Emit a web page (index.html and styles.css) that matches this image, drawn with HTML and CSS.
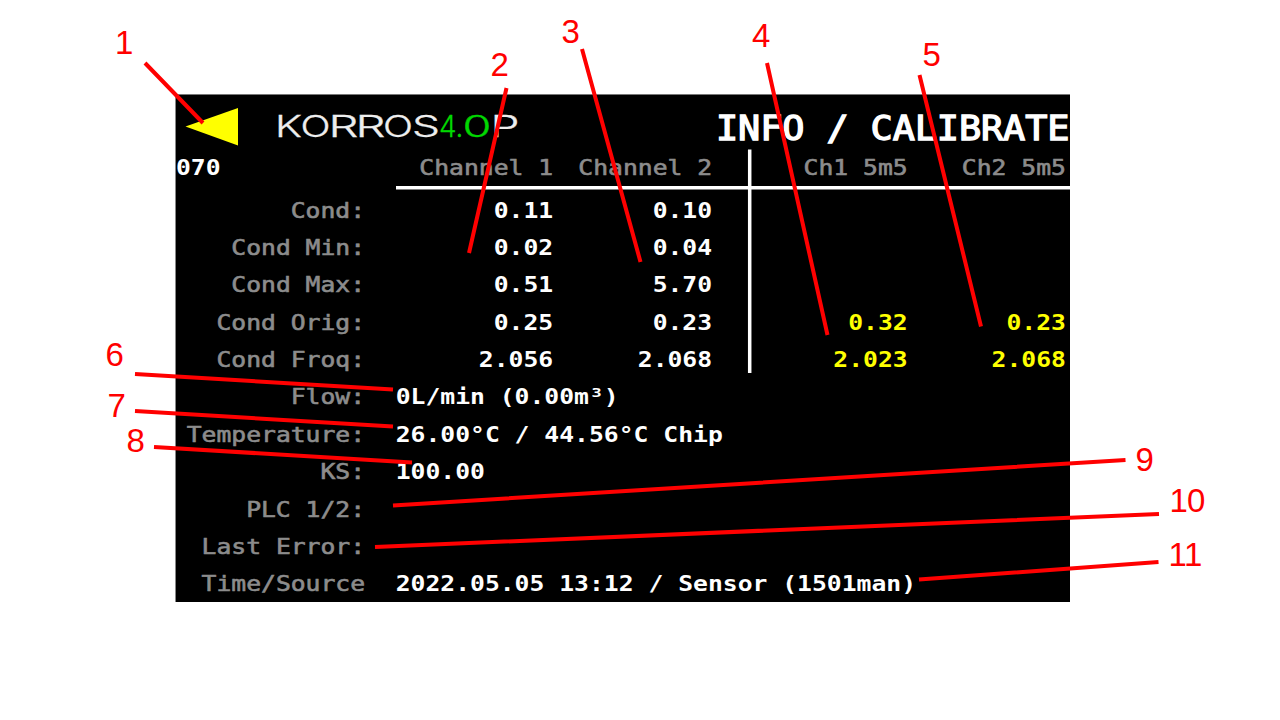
FILE: index.html
```
<!DOCTYPE html>
<html lang="en">
<head>
<meta charset="utf-8">
<title>Info / Calibrate</title>
<link rel="stylesheet" href="styles.css">
</head>
<body>
<main class="page">
  <section class="screen">
    <header class="top">
      <svg class="back" width="54" height="40" viewBox="0 0 54 40"><path d="M0.5 19.5 53 1v37.500z" fill="#ff0"/></svg>
      <svg class="logo" width="250" height="36" viewBox="278 108 250 36">
        <g class="brand">
          <text y="137" x="275" textLength="27" lengthAdjust="spacingAndGlyphs">K</text>
          <text y="137" x="300.500" textLength="30" lengthAdjust="spacingAndGlyphs">O</text>
          <text y="137" x="328.500" textLength="30" lengthAdjust="spacingAndGlyphs">R</text>
          <text y="137" x="355.500" textLength="30" lengthAdjust="spacingAndGlyphs">R</text>
          <text y="137" x="383" textLength="30" lengthAdjust="spacingAndGlyphs">O</text>
          <text y="137" x="412" textLength="28" lengthAdjust="spacingAndGlyphs">S</text>
          <g class="green">
            <text y="137" x="439" textLength="24.500" lengthAdjust="spacingAndGlyphs">4.</text>
            <text y="137" x="462.500" textLength="29" lengthAdjust="spacingAndGlyphs">0</text>
          </g>
          <text y="137" x="490.500" textLength="29" lengthAdjust="spacingAndGlyphs">P</text>
        </g>
      </svg>
      <h1 class="title">INFO / CALIBRATE</h1>
    </header>
    <div class="readings">
      <span class="code">070</span><span class="head">Channel 1</span><span class="head">Channel 2</span><span class="head">Ch1 5m5</span><span class="head">Ch2 5m5</span>
      <span class="label">Cond:</span><b>0.11</b><b>0.10</b><b></b><b></b>
      <span class="label">Cond Min:</span><b>0.02</b><b>0.04</b><b></b><b></b>
      <span class="label">Cond Max:</span><b>0.51</b><b>5.70</b><b></b><b></b>
      <span class="label">Cond Orig:</span><b>0.25</b><b>0.23</b><b class="yellow">0.32</b><b class="yellow">0.23</b>
      <span class="label">Cond Froq:</span><b>2.056</b><b>2.068</b><b class="yellow">2.023</b><b class="yellow">2.068</b>
      <span class="label">Flow:</span><b class="wide">0L/min (0.00m³)</b>
      <span class="label">Temperature:</span><b class="wide">26.00°C / 44.56°C Chip</b>
      <span class="label">KS:</span><b class="wide">100.00</b>
      <span class="label">PLC 1/2:</span><b class="wide"></b>
      <span class="label">Last Error:</span><b class="wide"></b>
      <span class="label">Time/Source</span><b class="wide">2022.05.05 13:12 / Sensor (1501man)</b>
    </div>
  </section>
  <svg class="overlay" width="1280" height="720" viewBox="0 0 1280 720">
    <g class="rules"><path d="M396 187.800H1070M749.700 149.500V373"/></g>
    <g class="leaders">
      <path d="M145 63 203 123M506.500 88 469 253M582 49 640.500 262M767 63 827.500 335M919.500 75 981 326.500M135 374 393 389.500M135 411 393 426.500M154 447 412 462.500M393 505.500 1125.500 460M375 547 1159 514M919 579.500 1158.500 562"/>
    </g>
    <g class="numbers">
      <text x="115" y="54">1</text><text x="490.500" y="75.500">2</text><text x="561.500" y="42.500">3</text>
      <text x="752" y="47">4</text><text x="922.500" y="65.500">5</text><text x="105.500" y="365.500">6</text>
      <text x="107.500" y="416.500">7</text><text x="126.500" y="451.500">8</text><text x="1135.500" y="471">9</text>
      <text x="1169.500 1187" y="512">10</text><text x="1168.500 1184" y="565.500">11</text>
    </g>
  </svg>
</main>
</body>
</html>
```
FILE: styles.css
```
body { margin: 0; background: #fff; }
.page {
  position: relative;
  box-sizing: border-box;
  width: 1280px;
  height: 720px;
  padding: 94px 0 0 175px;
  overflow: hidden;
}
.screen {
  box-sizing: border-box;
  width: 895px;
  height: 508px;
  border-top: 1px solid #777;
  border-left: 1px solid #888;
  background: #000;
  color: #fff;
  overflow: hidden;
  font-family: "DejaVu Sans Mono", monospace;
}
.top {
  display: flex;
  align-items: flex-start;
  height: 55px;
}
.back { margin: 12px 0 0 9px; flex: none; }
.logo { margin: 13px 0 0 39px; flex: none; overflow: visible; }
.brand {
  font-family: Inter, sans-serif;
  font-weight: 300;
  font-size: 30px;
  fill: #eee;
  stroke: #eee;
  stroke-width: 0.300px;
}
.brand .green { fill: #00d800; stroke: #00d800; }
.title {
  margin: 14px 0 0 188px;
  font-size: 33px;
  line-height: 40px;
  font-weight: normal;
  -webkit-text-stroke: 1.300px #fff;
  letter-spacing: -0.100px;
  white-space: pre;
  transform: scaleX(1.117);
  transform-origin: 0 0;
}
/* The display's characters are wider than the font's own cells. */
.readings {
  display: grid;
  grid-template-columns: 160.8px 159.9px 135.2px 166.3px 134.6px;
  grid-template-rows: 42.500px;
  grid-auto-rows: 37.380px;
  width: 758px;
  font-size: 21px;
  line-height: 37.300px;
  text-align: right;
  white-space: pre;
  transform: scaleX(1.176);
  transform-origin: 0 0;
}
.code { text-align: left; font-weight: bold; }
.head, .label { color: #8c8c8c; -webkit-text-stroke: 0.6px #8c8c8c; }
.wide {
  grid-column: 2 / -1;
  padding-left: 26px;
  text-align: left;
}
.yellow { color: #ff0; }
.overlay { position: absolute; inset: 0; }
.rules { fill: none; stroke: #fff; stroke-width: 3.500px; }
.leaders { fill: none; stroke: #f00; stroke-width: 4px; }
.numbers {
  fill: #f00;
  font: 33px "Liberation Sans", sans-serif;
}
```
